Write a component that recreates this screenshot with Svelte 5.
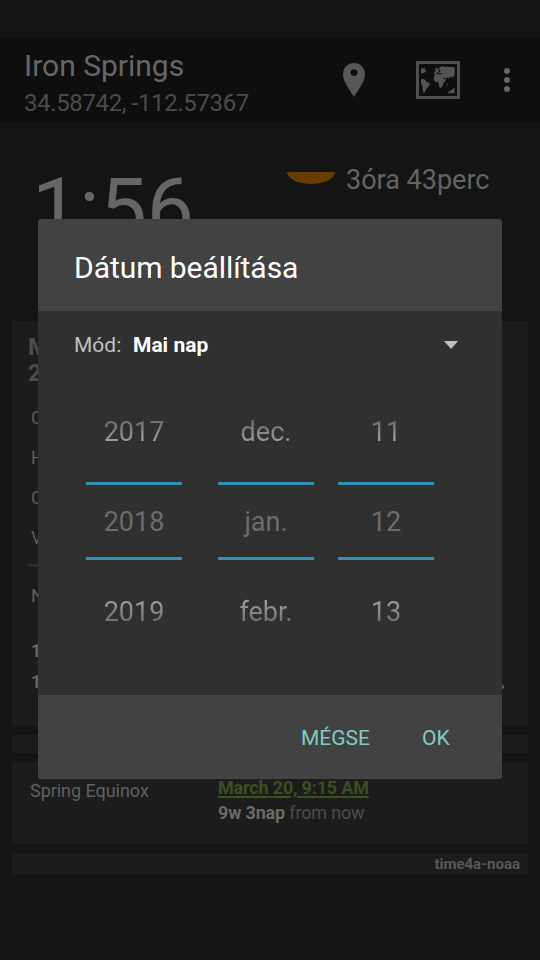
<script>
  const pickers = [
    ['2017', '2018', '2019'],
    ['dec.', 'jan.', 'febr.'],
    ['11', '12', '13'],
  ];
  const rows = ['C', 'H', 'C', 'V'];
</script>

<div class="screen">
  <header>
    <div class="place">
      <div class="name">Iron Springs</div>
      <div class="coords">34.58742, -112.57367</div>
    </div>
    <svg class="pin" width="22" height="34" viewBox="0 0 22 34">
      <path fill="#575757" fill-rule="evenodd" d="M11 0C4.900 0 0 4.900 0 11c0 7 4.500 12.500 11 23 6.500-10.500 11-16 11-23C22 4.900 17.100 0 11 0zm0 6.200a3.400 3.400 0 1 1 0 6.800 3.400 3.400 0 0 1 0-6.800z" />
    </svg>
    <svg class="map" width="44" height="38" viewBox="0 0 132 114">
      <path fill="none" stroke="#4f4f4f" stroke-width="9" d="M4.500 4.500h123v105H4.500z" />
      <path fill="#545454" d="M15 24l6-3 6 0-1 5 4 3 4 1-7 2-3 4-4-1-2 5-3-4zM15 55l8-1 5 4 3 4 8 3 3 3-3 7-5 5-5 6-3 8-4 1-2-9-1-12-4-7zM54 46l3-6 8-2 5 3 9 0 3 9 3 5 4 0-1 5-5 6-2 7-4 6-5 2-3-5-2-12-9-1-5-7zM56 29l5-2 3-3 6-2 3-5 9-1 4 2 10-1 20 2v24l-4 2 1 7-4-6-3 6-4-7-4 8-4-4-5 5-6-5-6-2-3-6-10-1-3-2-6 1-1-6 4-1zM57 22l4-2 3 1-3 5-3 1zM90 73l4-6 1 3-3 6zM97 92l6-3 6-4 7-4v16H97z" />
      <path fill="#0e0e0e" d="M67 31l3-6 3 0-1 4 3 2-5 2zM61 35l5-1 5 3 7-1 1 3-8 1-8-2z" />
    </svg>
    <svg class="more" width="6" height="24" viewBox="0 0 6 24" fill="#666">
      <circle cx="3" cy="3" r="3" /><circle cx="3" cy="12" r="3" /><circle cx="3" cy="21" r="3" />
    </svg>
  </header>

  <section class="clock">
    <div class="time">1:56</div>
    <div class="left">
      <span class="sun"></span>
      <span>3óra 43perc</span>
    </div>
  </section>

  <section class="card main">
    <div class="heading">M<br />2</div>
    <div class="rows">
      {#each rows as r}<div>{r}</div>{/each}
    </div>
    <hr />
    <div class="noon">N</div>
    <div class="last"><b>1</b><b>1</b></div>
    <svg class="arrow" width="8" height="8" viewBox="0 0 8 8"><path fill="#606060" d="M2 0l3.500 4L2 8z" /></svg>
  </section>
  <section class="card thin"></section>
  <section class="card equinox">
    <span class="label">Spring Equinox</span>
    <div>
      <div class="date">March 20, 9:15 AM</div>
      <div class="ago"><b>9w 3nap</b> from now</div>
    </div>
  </section>
  <section class="card source">time4a-noaa</section>

  <div class="dialog">
    <div class="title">Dátum beállítása</div>
    <div class="body">
      <div class="mode">
        <span class="mode-label">Mód:</span>
        <b>Mai nap</b>
        <svg width="14" height="8" viewBox="0 0 14 8"><path fill="#c0c0c0" d="M0 0h14L7 8z" /></svg>
      </div>
      <div class="pickers">
        {#each pickers as p, i}
          <div class="picker" class:wide={i === 0}>
            <div class="opt prev">{p[0]}</div>
            <div class="opt cur">{p[1]}</div>
            <div class="opt next">{p[2]}</div>
          </div>
        {/each}
      </div>
    </div>
    <footer>
      <span class="cancel">MÉGSE</span>
      <span class="ok">OK</span>
    </footer>
  </div>
</div>

<style>
  :global(body) { background: #141414; }
  .screen {
    position: relative;
    box-sizing: border-box;
    width: 540px;
    height: 960px;
    padding-top: 38px;
    overflow: hidden;
    background: #141414;
    color: #606060;
    font-family: Roboto, sans-serif;
    font-size: 18px;
  }
  header {
    display: flex;
    height: 84px;
    background: #0e0e0e;
  }
  .place { width: 319px; padding: 10px 0 0 24px; white-space: nowrap; }
  .name { font-size: 30px; line-height: 35px; color: #666; }
  .coords { margin-top: 6px; font-size: 24px; line-height: 28px; letter-spacing: -0.37px; color: #4b4b4b; }
  header svg { flex: none; }
  .pin { margin-top: 25px; }
  .map { margin: 23px 0 0 51px; }
  .more { margin: 30px 0 0 44px; }

  .clock { display: flex; height: 199px; }
  .time { width: 253px; padding: 38px 0 0 32px; font-size: 84px; line-height: 98px; color: #666; }
  .left { display: flex; gap: 11px; padding-top: 42px; font-size: 27px; line-height: 32px; color: #646464; white-space: nowrap; }
  .sun { width: 48px; height: 12px; margin: 8px 0 0 2px; border-radius: 0 0 24px 24px / 0 0 12px 12px; background: #663d00; }

  .card { box-sizing: border-box; margin: 0 12px 9px; background: #1c1c1c; }
  .main { position: relative; height: 405px; padding: 13px 16px 0; }
  .heading { font-size: 24px; line-height: 26px; font-weight: 700; color: #4d4d4d; }
  .rows { height: 166px; margin: 12px 0 0 3px; line-height: 40px; color: #5c5c5c; }
  hr { width: 400px; height: 3px; margin: 0; border: 0; background: #2b2b2b; }
  .noon { margin: 18px 0 0 3px; line-height: 21px; }
  .last { display: flex; flex-direction: column; margin: 29px 0 0 3px; line-height: 31px; color: #666; }
  .arrow { position: absolute; left: 487px; top: 362px; }
  .thin { height: 18px; }
  .equinox { display: flex; height: 82px; padding: 15px 18px 0; line-height: 25px; white-space: nowrap; }
  .label { width: 188px; padding-top: 1px; letter-spacing: -0.04px; }
  .date { margin-top: -2px; color: #38521f; font-weight: 700; letter-spacing: -0.17px; text-decoration: underline; text-decoration-thickness: 1.500px; text-underline-offset: 2px; }
  .ago { color: #4c4c4c; letter-spacing: -0.17px; }
  .ago b { color: #6a6a6a; }
  .source { height: 21px; padding-right: 8px; text-align: right; font-size: 15px; line-height: 22px; font-weight: 700; color: #585858; }

  .dialog {
    position: absolute;
    left: 38px;
    top: 219px;
    width: 464px;
    height: 560px;
    border-radius: 3px;
    overflow: hidden;
    background: #303030;
  }
  .title { box-sizing: border-box; height: 92px; padding: 31px 36px 0; background: #424242; color: #fff; font-size: 30px; line-height: 35px; letter-spacing: -0.05px; }
  .body { height: 384px; }
  .mode { display: flex; align-items: center; height: 68px; padding: 0 44px 0 36px; font-size: 21px; color: #fff; }
  .mode-label { width: 59px; color: #c0c0c0; }
  .mode svg { margin-left: auto; }
  .pickers { display: flex; gap: 24px; padding: 8px 0 0 48px; }
  .picker { width: 96px; text-align: center; font-size: 27px; }
  .picker.wide { margin-right: 12px; }
  .opt { color: transparent; background-clip: text; -webkit-background-clip: text; }
  .prev { height: 95px; line-height: 90px; background-image: linear-gradient(#303030 0, #707070 35px, #9e9e9e 55px, #a0a0a0); }
  .cur { box-sizing: border-box; height: 78px; border: solid #3390b5; border-width: 3px 0; line-height: 74px; color: #6c6c6c; }
  .next { height: 97px; line-height: 104px; background-image: linear-gradient(#a0a0a0 0, #a0a0a0 40px, #707070 62px, #303030); }
  footer { display: flex; height: 84px; background: #424242; color: #80cbc4; font-size: 21px; line-height: 86px; }
  .cancel { width: 121px; margin-left: 263px; }
</style>
